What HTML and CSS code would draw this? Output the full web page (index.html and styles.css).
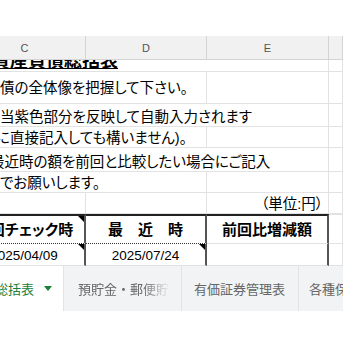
FILE: index.html
```html
<!DOCTYPE html>
<html lang="ja">
<head>
    <meta charset="UTF-8">
    <meta name="viewport" content="width=device-width, initial-scale=1.0">
    <title>資産負債総括表</title>
    <link rel="stylesheet" href="styles.css">
</head>
<body>
    <div class="sheet">
        <div class="top-space"></div>
        <div class="grid">
            <div class="col-head">C</div>
            <div class="col-head">D</div>
            <div class="col-head">E</div>
            <div class="col-head"></div>

            <div class="cell title span-3"><span class="title-text">資産負債総括表</span></div>
            <div class="cell"></div>

            <div class="cell span-2 row-b"><span class="spill">債の全体像を把握して下さい。</span></div>
            <div class="cell"></div>
            <div class="cell"></div>

            <div class="cell span-3"><span class="spill">当紫色部分を反映して自動入力されます</span></div>
            <div class="cell"></div>

            <div class="cell span-2"><span class="spill cut-d">に直接記入しても構いません)。</span></div>
            <div class="cell"></div>
            <div class="cell"></div>

            <div class="cell span-3"><span class="spill cut-e">最近時の額を前回と比較したい場合にご記入</span></div>
            <div class="cell"></div>

            <div class="cell span-2"><span class="spill">でお願いします。</span></div>
            <div class="cell"></div>
            <div class="cell"></div>

            <div class="cell"></div>
            <div class="cell"></div>
            <div class="cell unit">（単位:円）</div>
            <div class="cell"></div>

            <div class="cell th dotted note">前回チェック時</div>
            <div class="cell th dotted">最　近　時</div>
            <div class="cell th">前回比増減額</div>
            <div class="cell th-out"></div>

            <div class="cell td note">2025/04/09</div>
            <div class="cell td note">2025/07/24</div>
            <div class="cell td"></div>
            <div class="cell"></div>
        </div>
        <div class="tabs">
            <div class="tab active">
                <span class="tab-label">負債総括表</span>
                <span class="caret"></span>
            </div>
            <div class="tab second"><span class="tab-label fade">預貯金・郵便貯金</span></div>
            <div class="tab third"><span class="tab-label">有価証券管理表</span></div>
            <div class="tab fourth"><span class="tab-label">各種保険</span></div>
        </div>
    </div>
</body>
</html>
```

FILE: styles.css
```css
body {
    margin: 0;
    padding: 0;
    background: #fff;
    font-family: "Liberation Sans", "Noto Sans CJK JP", sans-serif;
    color: #000;
}

.sheet {
    width: 343px;
    height: 343px;
    overflow: hidden;
    background: #fff;
}

.top-space {
    height: 36px;
}

.grid {
    display: grid;
    margin-left: -36px;
    width: 379px;
    grid-template-columns: 122px 121px 122px 1fr;
    grid-template-rows: 24px 12px 32px 23px 21px 24px 21px 21px 30px 22px;
}

.col-head {
    box-sizing: border-box;
    background: #f1f1f1;
    border-right: 1px solid #d4d4d4;
    border-bottom: 1px solid #d4d4d4;
    display: flex;
    align-items: center;
    justify-content: center;
    font-size: 11px;
    color: #555;
}

.cell {
    box-sizing: border-box;
    position: relative;
    border-right: 1px solid #e2e2e2;
    border-bottom: 1px solid #e2e2e2;
    overflow: hidden;
    white-space: nowrap;
    display: flex;
    align-items: flex-end;
    padding: 0 3px;
    font-size: 14.5px;
    line-height: 18px;
    font-feature-settings: "palt";
}

.span-2 {
    grid-column: span 2;
}

.span-3 {
    grid-column: span 3;
}

.spill {
    margin-left: 33px;
}

.cut-d {
    margin-left: 29px;
}

.cut-e {
    margin-left: 23px;
}

.title-text {
    margin-left: 25px;
    font-size: 18px;
    font-weight: bold;
    text-decoration: underline;
    line-height: 18px;
    padding-bottom: 1px;
}

.row-b {
    align-items: center;
}

.unit {
    justify-content: flex-end;
    padding-right: 5px;
}

/* 表部分 */
.th {
    border-top: 2px solid #222;
    border-right: 2px solid #555;
    justify-content: center;
    align-items: center;
    padding: 0;
    font-size: 15px;
    font-weight: bold;
}

.th-out {
    border-top: 1px solid #e2e2e2;
}

.dotted {
    border-bottom: 1px dotted #333;
}

.td {
    border-right: 2px solid #555;
    justify-content: center;
    align-items: center;
    padding: 2px 0 0;
    font-size: 13.5px;
}

.note::after {
    content: "";
    position: absolute;
    top: 0;
    right: 0;
    border-top: 6px solid #000;
    border-left: 6px solid transparent;
}

/* シートタブ */
.tabs {
    display: flex;
    height: 45px;
    background: #f1f3f4;
    font-family: "Noto Sans CJK JP", sans-serif;
    font-size: 13px;
    color: #666;
}

.tab {
    box-sizing: border-box;
    display: flex;
    align-items: center;
    border-right: 1px solid #e3e3e3;
    white-space: nowrap;
    overflow: hidden;
}

.tab.active {
    width: 64px;
    background: #fff;
    color: #188038;
}

.tab.active .tab-label {
    margin-left: -31px;
}

.caret {
    margin-left: 10px;
    border-top: 5px solid #188038;
    border-left: 4px solid transparent;
    border-right: 4px solid transparent;
}

.tab.second {
    width: 118px;
    padding-left: 14px;
}

.fade {
    width: 92px;
    overflow: hidden;
    -webkit-mask-image: linear-gradient(to right, #000 70%, transparent);
    mask-image: linear-gradient(to right, #000 70%, transparent);
}

.tab.third {
    width: 117px;
    padding-left: 12px;
}

.tab.fourth {
    flex: 1;
    padding-left: 10px;
    border-right: none;
}
```
